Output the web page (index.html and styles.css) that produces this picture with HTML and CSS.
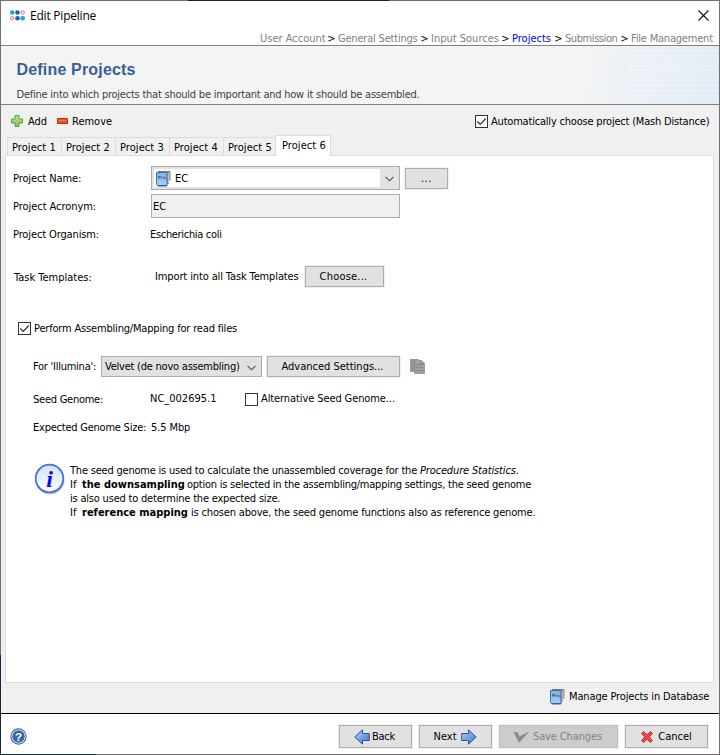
FILE: index.html
```
<!DOCTYPE html>
<html lang="en">
<head>
<meta charset="utf-8">
<title>Edit Pipeline</title>
<link rel="stylesheet" href="styles.css">
</head>
<body>
<svg class="defs" width="0" height="0">
  <defs>
    <linearGradient id="blue" x1="0" y1="0" x2="1" y2="1"><stop offset="0" stop-color="#b5d0f5"/><stop offset="1" stop-color="#3f74cc"/></linearGradient>
    <linearGradient id="green" x1="0" y1="0" x2="0" y2="1"><stop offset="0" stop-color="#c5e27e"/><stop offset="1" stop-color="#8fc04a"/></linearGradient>
    <linearGradient id="info" x1="0" y1="0" x2="0" y2="1"><stop offset="0" stop-color="#d3e2fb"/><stop offset="1" stop-color="#ffffff"/></linearGradient>
    <linearGradient id="book" x1="0" y1="0" x2="0" y2="1"><stop offset="0" stop-color="#7fb2e5"/><stop offset="1" stop-color="#a9d0f5"/></linearGradient>
    <symbol id="project" viewBox="0 0 16 17">
      <path d="M4 1h11v9l-2 1v3H5z" fill="#a3a3a3"/>
      <path d="M2 1.500h11.500" stroke="#777" fill="none"/>
      <path d="M14.500 1v9M12.500 4v9" stroke="#c4c4c4" fill="none"/>
      <path d="M.5 2.500h10.500v13.500H2L.5 14.500z" fill="url(#book)" stroke="#3a72ae"/>
      <path d="M1.500 15.500H11" stroke="#2c609c" fill="none"/>
      <path d="M2.500 6v3M2.500 6.500h2v1h-2M5.500 9V7h1M7.500 7h1v1.500h-1zM10 7v3" stroke="#3b4a5c" stroke-width=".6" fill="none"/>
    </symbol>
    <symbol id="chevron" viewBox="0 0 9 6"><path d="M.5 .8l4 4 4-4" stroke="#505050" stroke-width="1.1" fill="none"/></symbol>
    <symbol id="tick" viewBox="0 0 13 13"><path d="M2.200 6.500l3 3 5.600-6" stroke="#333" stroke-width="1.200" fill="none"/></symbol>
  </defs>
</svg>
<div class="window">
  <header class="titlebar">
    <svg class="logo" width="15" height="12" viewBox="0 0 15 12">
      <circle cx="2.200" cy="2.500" r="2.300" fill="#18a8e0"/><circle cx="7.500" cy="2.500" r="2.300" fill="#1c64a4"/><circle cx="12.700" cy="2.500" r="1.700" fill="#fff" stroke="#e858a8"/>
      <circle cx="2.200" cy="8.300" r="1.700" fill="#fff" stroke="#e858a8"/><circle cx="7.500" cy="8.300" r="2.300" fill="#1c64a4"/><circle cx="12.700" cy="8.300" r="2.300" fill="#18a8e0"/>
    </svg>
    <span class="caption">Edit Pipeline</span>
    <svg class="close" width="11" height="11" viewBox="0 0 11 11"><path d="M.5 .5l10 10M10.500 .5l-10 10" stroke="#111" stroke-width="1.100"/></svg>
  </header>
  <nav class="crumbs">
    <span class="c-user">User Account</span><i>&gt;</i><span class="c-general">General Settings</span><i>&gt;</i><span class="c-input">Input Sources</span><i>&gt;</i><span class="c-projects current">Projects</span><i>&gt;</i><span class="c-submission">Submission</span><i>&gt;</i><span class="c-files">File Management</span>
  </nav>
  <section class="banner">
    <h1>Define Projects</h1>
    <p>Define into which projects that should be important and how it should be assembled.</p>
  </section>
  <div class="toolbar">
    <svg width="12" height="12" viewBox="0 0 12 12"><path d="M4 .5h4V4h3.500v4H8v3.500H4V8H.5V4H4z" fill="url(#green)" stroke="#4f9e63"/></svg>
    <span class="t-add">Add</span>
    <svg width="11" height="6" viewBox="0 0 11 6"><path d="M.5 .5h10v5H.5z" fill="#e4552f" stroke="#c03010"/><path d="M2 2.500h7" stroke="#f7a07c" stroke-dasharray="1 1"/></svg>
    <span class="t-remove">Remove</span>
    <span class="box auto-box"><svg width="13" height="13"><use href="#tick"/></svg></span>
    <span class="t-auto">Automatically choose project (Mash Distance)</span>
  </div>
  <div class="tabs">
    <span class="tab">Project 1</span><span class="tab">Project 2</span><span class="tab">Project 3</span><span class="tab">Project 4</span><span class="tab">Project 5</span><span class="tab active">Project 6</span>
  </div>
  <main class="panel">
    <div class="row name">
      <label class="t-name">Project Name:</label>
      <div class="combo"><div class="value"><svg width="16" height="17"><use href="#project"/></svg><span>EC</span></div><svg class="arrow" width="9" height="6"><use href="#chevron"/></svg></div>
      <button class="more">...</button>
    </div>
    <div class="row acronym"><label class="t-acronym">Project Acronym:</label><div class="field">EC</div></div>
    <div class="row organism"><label class="t-organism">Project Organism:</label><span class="t-coli">Escherichia coli</span></div>
    <div class="row task"><label class="t-task">Task Templates:</label><span class="t-import">Import into all Task Templates</span><button class="choose">Choose...</button></div>
    <div class="row perform"><span class="box"><svg width="13" height="13"><use href="#tick"/></svg></span><span class="t-perform">Perform Assembling/Mapping for read files</span></div>
    <div class="row illumina">
      <label class="t-for">For 'Illumina':</label>
      <div class="select"><span>Velvet (de novo assembling)</span><svg width="9" height="6"><use href="#chevron"/></svg></div>
      <button class="advanced">Advanced Settings...</button>
      <svg class="copy" width="15" height="15" viewBox="0 0 15 15"><path d="M0 0h8l2 1.500V13H0z" fill="#999"/><path d="M4 1h7.500L15 4.500V15H4z" fill="#9f9f9f"/><path d="M5.500 5.500h8M5.500 8.500h8M5.500 11.500h8M1.500 3.500h2M1.500 6.500h2M1.500 9.500h2" stroke="#8b8b8b"/><path d="M4.500 1v12.500M11 1.500v3h3.500" stroke="#898989" fill="none"/></svg>
    </div>
    <div class="row seed"><label class="t-seed">Seed Genome:</label><span class="t-nc">NC_002695.1</span><span class="box"></span><span class="t-alt">Alternative Seed Genome...</span></div>
    <div class="row expected"><label class="t-expected">Expected Genome Size:</label><span class="t-mbp">5.5 Mbp</span></div>
    <div class="note">
      <svg width="32" height="32" viewBox="0 0 32 32"><circle cx="16" cy="17" r="14.500" fill="#c9c9cf"/><circle cx="15.500" cy="15.500" r="13.800" fill="url(#info)" stroke="#3f74df" stroke-width="1.800"/><text x="15.500" y="23.500" text-anchor="middle" class="info-i">i</text></svg>
      <div class="lines">
        <p><span class="n1">The seed genome is used to calculate the unassembled coverage for the </span><em>Procedure Statistics</em>.</p>
        <p><span class="lead">If</span><b>the downsampling</b><span class="n2">option is selected in the assembling/mapping settings, the seed genome</span></p>
        <p><span class="n3">is also used to determine the expected size.</span></p>
        <p><span class="lead">If</span><b>reference mapping</b><span class="n4">is chosen above, the seed genome functions also as reference genome.</span></p>
      </div>
    </div>
  </main>
  <div class="manage"><svg width="16" height="17"><use href="#project"/></svg><span>Manage Projects in Database</span></div>
  <footer>
    <svg class="help" width="17" height="17" viewBox="0 0 17 17"><circle cx="8.500" cy="8.500" r="7.600" fill="#fff" stroke="#3a68a5" stroke-width="1.100"/><circle cx="8.500" cy="8.500" r="6.200" fill="#3767a8"/><text x="8.500" y="12.700" text-anchor="middle" class="help-q">?</text></svg>
    <button class="back"><svg width="16" height="16" viewBox="0 0 16 16"><path d="M.8 8L8.500 .8V4.500h6.800v7H8.500v3.700z" fill="url(#blue)" stroke="#2f5597"/></svg><span>Back</span></button>
    <button class="next"><span>Next</span><svg width="16" height="16" viewBox="0 0 16 16"><path d="M15.200 8L7.500 .8V4.500H.7v7h6.800v3.700z" fill="url(#blue)" stroke="#2f5597"/></svg></button>
    <button class="save" disabled><svg width="17" height="12" viewBox="0 0 17 12"><path d="M.5 1.500l4-.5 2 4.500L16.500 .3 6 11.700z" fill="#8c8c8c"/></svg><span>Save Changes</span></button>
    <button class="cancel"><svg width="12" height="12" viewBox="0 0 12 12"><path d="M.6 2.400L2.400 .6 6 3.700 9.600 .6l1.800 1.800L8.300 6l3.100 3.600-1.800 1.800L6 8.300l-3.600 3.100L.6 9.600 3.700 6z" fill="#ee4650" stroke="#c52b38"/></svg><span>Cancel</span></button>
  </footer>
</div>
</body>
</html>
```
FILE: styles.css
```
* { box-sizing: border-box; }
body {
  margin: 0;
  width: 720px;
  height: 755px;
  padding: 1px;
  background:
    linear-gradient(to right, #707070 188px, #1a2233 188px 389px, #707070 389px) top / 100% 1px no-repeat,
    linear-gradient(to right, #1a2638 96px, #6f6a6a 96px) bottom / 100% 1px no-repeat,
    linear-gradient(#707070 655px, #1a2638 655px) left / 1px 100% no-repeat,
    #707070;
  font: 11px/14px "DejaVu Sans Condensed", "DejaVu Sans", sans-serif;
  color: #000;
}
.defs { position: absolute; }
svg { display: block; flex: none; }
span, label, b, em { white-space: pre; }
h1, p { margin: 0; }
.window { width: 718px; height: 753px; background: #f0f0f0; display: flex; flex-direction: column; }

.titlebar { height: 30px; background: #fff; display: flex; align-items: center; padding: 0 10px 0 9px; flex: none; }
.logo { margin-right: 5px; }
.caption { font: 12px/16px "Open Sans", sans-serif; letter-spacing: -.22px; }
.close { margin-left: auto; margin-top: -2px; }

.crumbs { height: 14px; line-height: 15px; background: #fff; display: flex; justify-content: flex-end; padding-right: 6px; color: #808080; flex: none; }
.crumbs i { width: 13px; text-align: center; font-style: normal; color: #000; }
.crumbs .current { color: #0000f0; }
.c-user { width: 65px; }
.c-general { width: 80px; letter-spacing: -.2px; }
.c-input { width: 68px; }
.c-projects { width: 40px; }
.c-submission { width: 53px; letter-spacing: -.42px; }
.c-files { width: 82px; letter-spacing: -.2px; }

.banner {
  height: 60px;
  border-top: 1px solid #808080;
  border-bottom: 1px solid #808080;
  padding: 14px 0 0 15.5px;
  flex: none;
  background:
    repeating-linear-gradient(to bottom, transparent 0 4px, rgba(255, 255, 255, .3) 4px 5px) right / 90px 100% no-repeat,
    linear-gradient(100deg, #f4f4f4 79%, #eaf0f6 90%, #e2ecf6 100%);
}
.banner h1 { font: bold 16px/20px "Liberation Sans", Arial, sans-serif; color: #365f98; letter-spacing: .18px; }
.banner p { margin-top: 8px; color: #404040; letter-spacing: -.23px; white-space: nowrap; }

.toolbar { height: 30px; display: flex; align-items: center; padding: 2px 9px 0 10px; flex: none; }
.t-add, .t-remove, .t-auto { padding-top: 2px; }
.t-add { width: 28px; padding-left: 5px; margin-right: 6px; }
.toolbar svg + .t-remove { margin-left: 4px; }
.box { width: 13px; height: 13px; border: 1px solid #333; background: #fff; flex: none; display: block; }
.box svg { margin: -1px; }
.auto-box { margin-left: auto; }
.t-auto { width: 219px; margin-left: 3px; letter-spacing: -.2px; }

.tabs { height: 20px; display: flex; align-items: flex-end; padding-left: 6px; flex: none; }
.tab { width: 54px; height: 18px; border: 1px solid #dcdcdc; border-right: 0; border-bottom: 0; padding: 3px 0 0 4px; letter-spacing: .07px; }
.tab:nth-child(5) { width: 53px; }
.tab.active { width: 56px; height: 21px; margin: 0 0 -1px -1px; padding: 3px 0 0 6px; background: #fff; border-right: 1px solid #dcdcdc; position: relative; }

.panel { margin-left: 4px; width: 709px; height: 528px; background: #fff; border: 1px solid #dcdcdc; padding: 10px 0 0 7px; flex: none; }
.row { display: flex; align-items: center; }
.name { height: 24px; }
.row label { width: 138px; flex: none; }
.name label, .acronym label, .organism label, .organism span, .task label, .value span { padding-top: 2px; }
.combo { width: 249px; height: 24px; border: 1px solid #adadad; background: #e3e3e3; display: flex; align-items: center; padding: 0 5px 0 2px; }
.value { width: 226px; height: 18px; background: #fff; display: flex; align-items: center; padding-left: 2px; }
.value span { margin-left: 3px; }
.combo .arrow { margin: 2px 0 0 auto; }
button { font: inherit; color: #000; background: #e1e1e1; border: 1px solid #adadad; box-shadow: 0 0 0 1px #f1f1f1; border-radius: 0; padding: 0; height: 21px; flex: none; display: flex; align-items: center; justify-content: center; }
.more { width: 43px; margin-left: 5px; padding-top: 2px; letter-spacing: .6px; }
.acronym { height: 24px; margin-top: 4px; }
.field { width: 249px; height: 24px; border: 1px solid #adadad; background: #f0f0f0; padding: 5px 1px; }
.organism { height: 24px; margin-top: 4px; }
.organism span { margin-left: -1px; }
.task { height: 21px; margin-top: 20px; }
.row .t-task { padding-left: 1px; }
.t-import { width: 145px; margin: 0 5px 0 4px; letter-spacing: -.12px; }
.choose { width: 79px; padding-right: 2px; letter-spacing: .2px; }
.perform { height: 13px; margin-top: 35px; padding-left: 5px; }
.t-perform { margin-left: 3px; letter-spacing: -.18px; }
.illumina { height: 21px; margin-top: 21px; padding-left: 20px; }
.row .t-for { width: 68px; letter-spacing: -.25px; }
.select { width: 161px; height: 21px; border: 1px solid #adadad; background: #e1e1e1; display: flex; align-items: center; padding: 0 5px 0 3px; letter-spacing: -.23px; }
.select svg { margin: 2px 0 0 auto; }
.advanced { width: 133px; margin: 0 10px 0 5px; padding-right: 2px; }
.seed { height: 14px; margin-top: 15px; padding-left: 20px; }
.seed > label { padding-top: 2px; }
.row .t-seed { width: 117px; letter-spacing: -.25px; }
.t-nc { width: 95px; }
.t-alt { margin-left: 3px; letter-spacing: -.1px; }
.expected { height: 14px; margin-top: 15px; padding-left: 20px; }
.row .t-expected { width: 118px; letter-spacing: -.23px; }
.t-mbp { letter-spacing: -.1px; }
.t-name { letter-spacing: -.1px; }
.t-acronym { letter-spacing: -.05px; }
.t-organism { letter-spacing: -.12px; }
.t-coli { letter-spacing: -.32px; }
.note { display: flex; margin-top: 28px; padding-left: 21px; }
.lines { margin: 1px 0 0 4px; }
.lines p { display: flex; height: 14px; }
.lead { width: 12px; }
.lines b { width: 105px; }
.lines p:last-child b { width: 109px; }
.n1 { width: 350px; letter-spacing: -.21px; }
.lines em { letter-spacing: -.15px; }
.n2 { letter-spacing: -.24px; }
.n3 { letter-spacing: -.2px; }
.n4 { letter-spacing: -.17px; }
.info-i { font: italic bold 24px "Liberation Serif", serif; fill: #0a0ae6; }

.manage { height: 30px; display: flex; align-items: center; justify-content: flex-end; padding-right: 9px; padding-bottom: 4px; flex: none; }
.manage span { width: 141px; margin-left: 3px; padding-top: 2px; letter-spacing: -.14px; }
footer { flex: 1; background: #fff; border-top: 1px solid #000; display: flex; align-items: flex-start; padding: 11px 11px 0 9px; }
footer button { height: 23px; }
.help { margin: 3px auto 0 0; }
.help-q { font: bold 11.500px "Liberation Sans", sans-serif; fill: #fff; }
.back, .next { width: 73px; margin-right: 7px; }
.back span { margin-left: 2px; letter-spacing: -.2px; }
.back { padding-right: 2px; }
.next { padding-right: 1px; }
.next span { margin-right: 4px; }
.save { width: 119px; margin-right: 7px; padding-right: 2px; background: #ccc; border-color: #bfbfbf; color: #838383; letter-spacing: -.12px; }
.save span { margin-left: 3px; }
.cancel { width: 83px; }
.cancel span { margin-left: 5px; }
```
